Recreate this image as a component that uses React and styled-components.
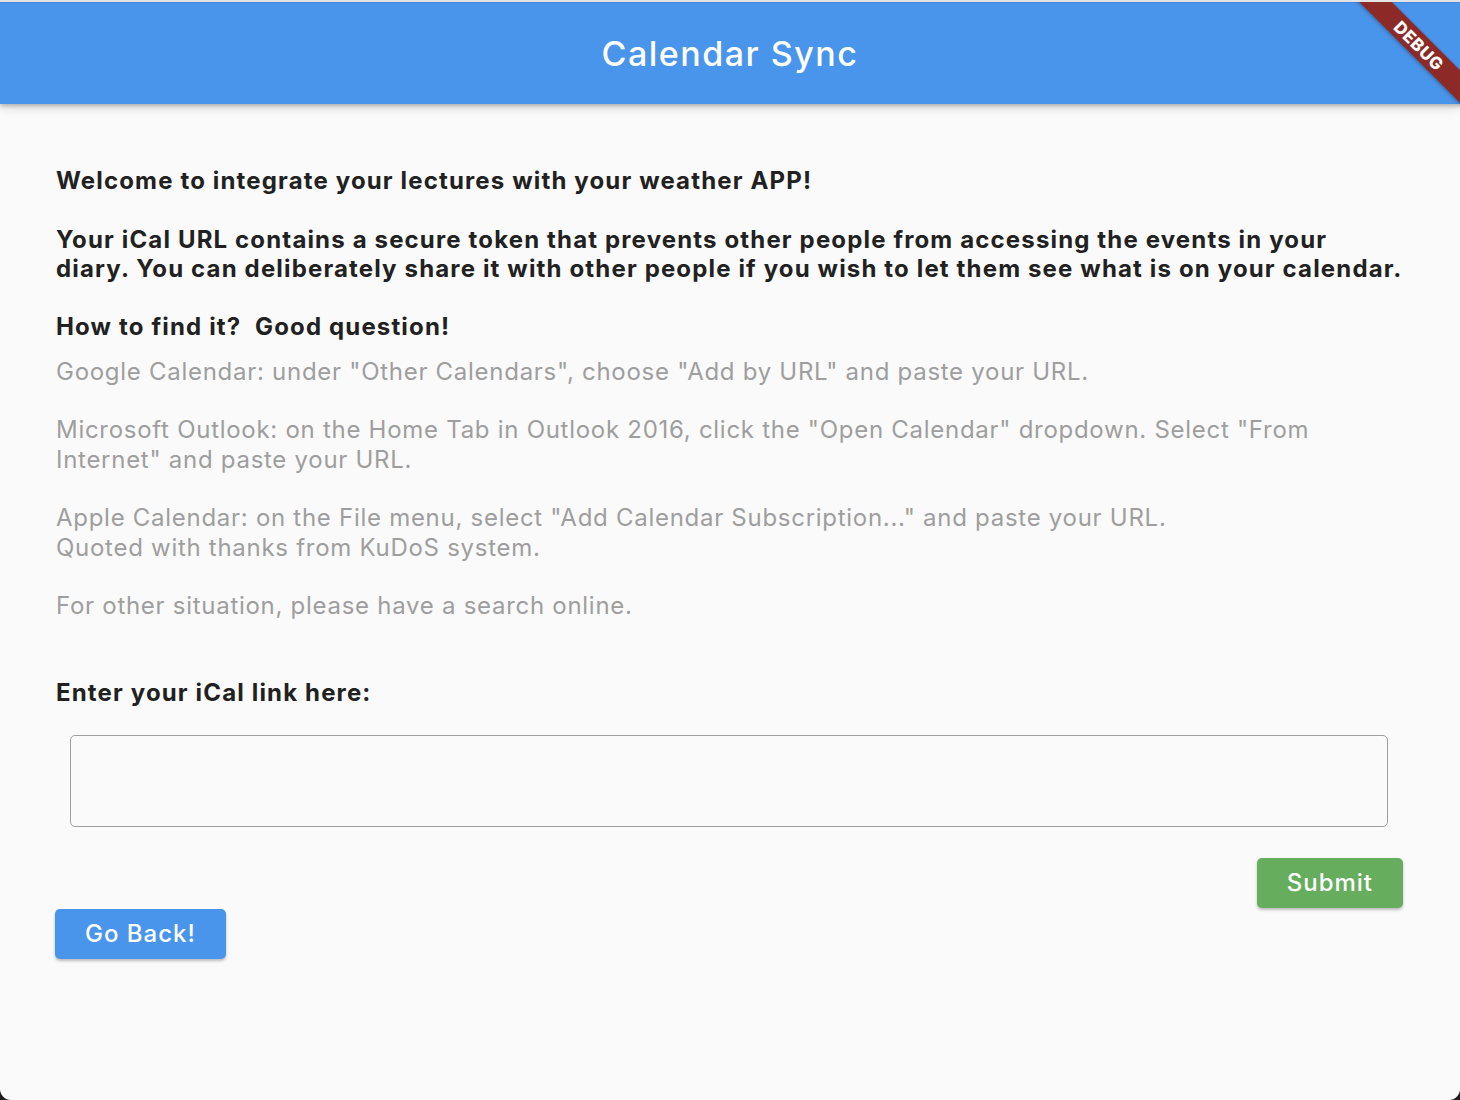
import React from 'react'
import styled, { createGlobalStyle } from 'styled-components'

const GlobalStyle = createGlobalStyle`
  html, body {
    margin: 0;
    padding: 0;
    background: #1c1c1c;
  }
  * {
    box-sizing: border-box;
  }
`

const Ventana = styled.div`
  position: relative;
  width: 1460px;
  height: 1100px;
  overflow: hidden;
  background-color: #fafafa;
  border-top: 2px solid #e4e4e4;
  border-radius: 0 0 11px 11px;
  font-family: Inter, "Noto Sans", sans-serif;
  display: flex;
  flex-direction: column;
`

const BarraSuperior = styled.header`
  height: 102px;
  flex-shrink: 0;
  display: flex;
  align-items: center;
  justify-content: center;
  background-color: #4a95ec;
  border-top: 1px solid #3f86dc;
  box-shadow: 0 2px 4px rgba(0, 0, 0, .22), 0 4px 10px rgba(0, 0, 0, .12);
  position: relative;
  z-index: 1;
`

const Titulo = styled.h1`
  margin: 0;
  font-size: 34px;
  font-weight: 500;
  color: #fff;
  letter-spacing: 1.5px;
`

const FaixaDebug = styled.div`
  position: absolute;
  top: 32px;
  left: 1314px;
  width: 210px;
  height: 23px;
  transform: rotate(45deg);
  background-color: #8b2a27;
  box-shadow: 0 1px 4px rgba(0, 0, 0, .35);
  color: #fff;
  font-size: 17px;
  font-weight: 800;
  letter-spacing: 0.6px;
  display: flex;
  align-items: center;
  justify-content: center;
  z-index: 2;
`

const Conteudo = styled.main`
  padding: 62px 56px 0 56px;
  display: flex;
  flex-direction: column;
`

const Texto = styled.p`
  margin: 0;
  white-space: pre-wrap;
  font-size: 24px;
  line-height: 29.3px;
  letter-spacing: ${ props => props.negrito ? '1.15px' : '0.72px' };
  font-weight: ${ props => props.negrito ? 700 : 400 };
  color: ${ props => props.negrito ? '#212121' : '#9e9e9e' };
`

const BlocoInstrucoes = styled(Texto)`
  margin-top: 15px;
`

const Rotulo = styled(Texto)`
  margin-top: 58px;
`

const CampoLink = styled.input`
  margin: 27px 16px 0 14px;
  height: 92px;
  border: 1.5px solid #9e9e9e;
  border-radius: 5px;
  background: transparent;
  font-family: inherit;
  font-size: 24px;
  padding: 0 16px;
  outline: none;
`

const Botao = styled.button`
  height: 50px;
  padding: 0 30px;
  border: none;
  border-radius: 5px;
  font-family: inherit;
  font-size: 24px;
  font-weight: 500;
  letter-spacing: 1px;
  color: #fff;
  cursor: pointer;
  box-shadow: 0 2px 3px rgba(0, 0, 0, .25);
  background-color: ${ props => props.verde ? '#66ad5e' : '#4a95ec' };
  align-self: ${ props => props.verde ? 'flex-end' : 'flex-start' };
`

const BotaoEnviar = styled(Botao)`
  margin-top: 31px;
  margin-right: 1px;
`

const BotaoVoltar = styled(Botao)`
  margin-left: -1px;
  margin-top: 1px;
`

export default function App() {
  return (
    <>
      <GlobalStyle />
      <Ventana>
        <BarraSuperior>
          <Titulo>Calendar Sync</Titulo>
        </BarraSuperior>
        <FaixaDebug>DEBUG</FaixaDebug>
        <Conteudo>
          <Texto negrito>
            {'Welcome to integrate your lectures with your weather APP!\n\nYour iCal URL contains a secure token that prevents other people from accessing the events in your diary. You can deliberately share it with other people if you wish to let them see what is on your calendar.\n\nHow to find it?  Good question!'}
          </Texto>
          <BlocoInstrucoes>
            {'Google Calendar: under "Other Calendars", choose "Add by URL" and paste your URL.\n\nMicrosoft Outlook: on the Home Tab in Outlook 2016, click the "Open Calendar" dropdown. Select "From Internet" and paste your URL.\n\nApple Calendar: on the File menu, select "Add Calendar Subscription..." and paste your URL.\nQuoted with thanks from KuDoS system.\n\nFor other situation, please have a search online.'}
          </BlocoInstrucoes>
          <Rotulo negrito>Enter your iCal link here:</Rotulo>
          <CampoLink type="text" />
          <BotaoEnviar verde>Submit</BotaoEnviar>
          <BotaoVoltar>Go Back!</BotaoVoltar>
        </Conteudo>
      </Ventana>
    </>
  )
}
